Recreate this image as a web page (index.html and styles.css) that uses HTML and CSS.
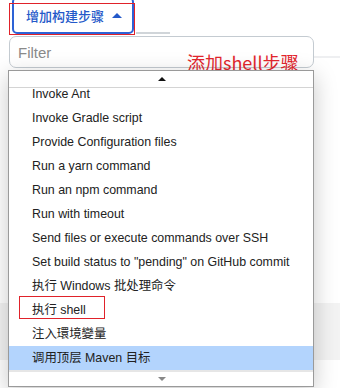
FILE: index.html
```html
<!DOCTYPE html>
<html>
<head>
<meta charset="utf-8">
<link rel="stylesheet" href="styles.css">
</head>
<body>
<div class="page">
  <div class="toolbar">
    <button class="add-btn">增加构建步骤 <span class="caret-up"></span></button>
    <div class="rule-stub"></div>
  </div>
  <div class="filter-row">
    <div class="filter">Filter</div>
    <div class="filter-line"></div>
  </div>
  <div class="band"></div>

  <div class="anno-btn"></div>
  <div class="anno-text">添加shell步骤</div>

  <div class="menu">
    <div class="scroll-up"><span class="tri-up"></span></div>
    <div class="viewport">
      <ul class="items">
        <li>Invoke Ant</li>
        <li>Invoke Gradle script</li>
        <li>Provide Configuration files</li>
        <li>Run a yarn command</li>
        <li>Run an npm command</li>
        <li>Run with timeout</li>
        <li>Send files or execute commands over SSH</li>
        <li>Set build status to "pending" on GitHub commit</li>
        <li>执行 Windows 批处理命令</li>
        <li>执行 shell</li>
        <li>注入環境變量</li>
        <li class="active">调用顶层 Maven 目标</li>
      </ul>
    </div>
    <div class="scroll-down"><span class="tri-down"></span></div>
  </div>
  <div class="anno-item"></div>
</div>
</body>
</html>
```

FILE: styles.css
```css
html, body {
  margin: 0;
  padding: 0;
  background: #fff;
}
body {
  width: 340px;
  height: 388px;
  overflow: hidden;
  font-family: "Liberation Sans", Arial, "Noto Sans CJK SC", sans-serif;
}
.page {
  position: relative;
  width: 340px;
  height: 388px;
}
.toolbar {
  display: flex;
  align-items: flex-end;
  padding-left: 12px;
}
.add-btn {
  margin-top: -3px;
  box-sizing: border-box;
  width: 122px;
  height: 37px;
  border: 2px solid #2d63d6;
  border-radius: 5px;
  background: #fff;
  color: #2459c9;
  font-family: "Liberation Sans", Arial, "Noto Sans CJK SC", sans-serif;
  font-size: 13px;
  font-weight: 500;
  display: flex;
  align-items: center;
  justify-content: center;
  gap: 6px;
  padding: 0 0 0 2px;
}
.caret-up {
  width: 0;
  height: 0;
  border-left: 5px solid transparent;
  border-right: 5px solid transparent;
  border-bottom: 5px solid #2459c9;
  margin-left: 2px;
}
.rule-stub {
  width: 34px;
  height: 2px;
  background: #d0d5d9;
  margin-left: 2px;
}
.filter-row {
  display: flex;
  align-items: center;
  padding-left: 9px;
  margin-top: 2px;
}
.filter {
  box-sizing: border-box;
  width: 305px;
  height: 32px;
  border: 1.5px solid #c4cbd1;
  border-radius: 7px;
  padding-left: 8px;
  display: flex;
  align-items: center;
  color: #8a8a8a;
  font-size: 15px;
}
.filter-line {
  flex: 1;
  height: 2px;
  background: #eeeff1;
  margin-top: 10px;
}
.band {
  margin-top: 235px;
  height: 57px;
  background: #f3f3f3;
}
.anno-btn {
  position: absolute;
  left: 9px;
  top: 3px;
  width: 124px;
  height: 30px;
  border: 1.5px solid #e0222a;
}
.anno-text {
  position: absolute;
  left: 187px;
  top: 50px;
  color: #e3262d;
  font-size: 18px;
  font-family: "Noto Sans CJK SC", sans-serif;
  line-height: 24px;
}
.menu {
  position: absolute;
  left: 8px;
  top: 70px;
  width: 304px;
  height: 315px;
  border: 1px solid #9a9a9a;
  background: #fff;
  box-shadow: 0 6px 22px rgba(0, 0, 0, 0.22);
  display: flex;
  flex-direction: column;
}
.scroll-up {
  height: 16px;
  border-bottom: 1px solid #d4d4d4;
  display: flex;
  align-items: center;
  justify-content: center;
}
.tri-up {
  width: 0;
  height: 0;
  border-left: 4px solid transparent;
  border-right: 4px solid transparent;
  border-bottom: 4px solid #111;
  margin-left: 1px;
}
.viewport {
  height: 282px;
  overflow: hidden;
}
.items {
  list-style: none;
  margin: -6px 0 0 0;
  padding: 0;
}
.items li {
  height: 24px;
  line-height: 24px;
  padding-left: 23px;
  font-size: 12.4px;
  color: #222;
  white-space: nowrap;
}
.items li.active {
  background: #b3d4fd;
}
.scroll-down {
  flex: 1;
  border-top: 2px solid #e6e6e6;
  display: flex;
  align-items: center;
  justify-content: center;
}
.tri-down {
  width: 0;
  height: 0;
  border-left: 4px solid transparent;
  border-right: 4px solid transparent;
  border-top: 4px solid #888;
  margin-left: 1px;
}
.anno-item {
  position: absolute;
  left: 19px;
  top: 296px;
  width: 84px;
  height: 21px;
  border: 1.5px solid #e0222a;
}
```
